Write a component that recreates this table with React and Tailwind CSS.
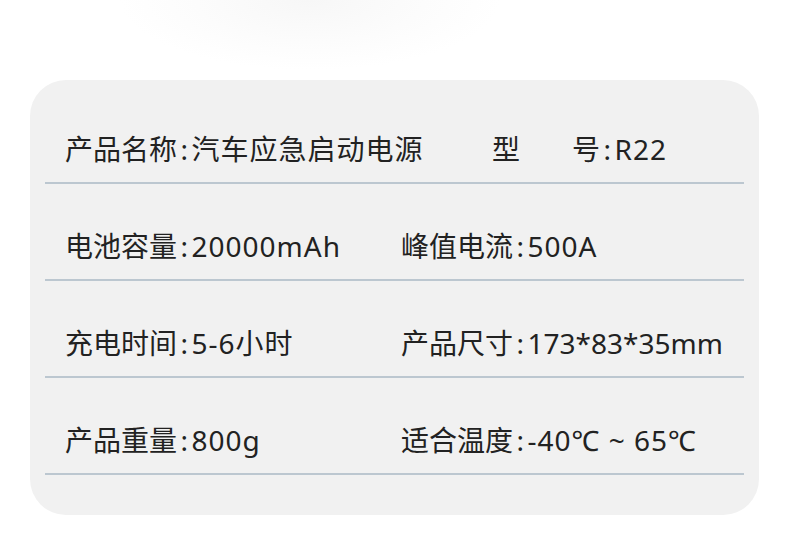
import React from 'react';

const rows = [
  [['电池容量', '20000mAh'], ['峰值电流', '500A']],
  [['充电时间', '5-6小时'], ['产品尺寸', '173*83*35mm', true]],
  [['产品重量', '800g'], ['适合温度', '-40℃ ~ 65℃']],
];

function Spec({ label, value, tight }) {
  return (
    <>
      {label}
      <span className="mx-[3.5px]">:</span>
      <span className={tight ? 'tracking-normal' : 'tracking-[1px]'}>{value}</span>
    </>
  );
}

export default function App() {
  return (
    <div
      className="w-[790px] h-[537px] bg-white bg-[radial-gradient(ellipse_190px_70px_at_310px_0px,#f7f7f7,#fcfcfc_60%,#ffffff_100%)] pt-[80px] pl-[30px] text-[#222222]"
      style={{ fontFamily: '"Noto Sans", "Noto Sans CJK SC", sans-serif' }}
    >
      <div className="w-[729px] h-[435px] bg-[#f1f1f1] rounded-[36px] pt-[7px] px-[15px]">
        {/* 产品名称 / 型号 */}
        <div className="h-[97px] flex items-end pb-[13px] pl-[20px] border-b-2 border-[#bcc7d0] text-[28px] leading-[40px]">
          <span className="w-[427px]">
            <Spec label="产品名称" value="汽车应急启动电源" />
          </span>
          <span className="flex gap-[52px]">
            <span>型</span>
            <span>
              <Spec label="号" value="R22" />
            </span>
          </span>
        </div>

        {rows.map(([left, right], i) => (
          <div
            key={i}
            className="h-[97px] flex items-end pb-[13px] pl-[20px] border-b-2 border-[#bcc7d0] text-[28px] leading-[40px]"
          >
            <span className="w-[336px]">
              <Spec label={left[0]} value={left[1]} tight={left[2]} />
            </span>
            <span>
              <Spec label={right[0]} value={right[1]} tight={right[2]} />
            </span>
          </div>
        ))}
      </div>
    </div>
  );
}
